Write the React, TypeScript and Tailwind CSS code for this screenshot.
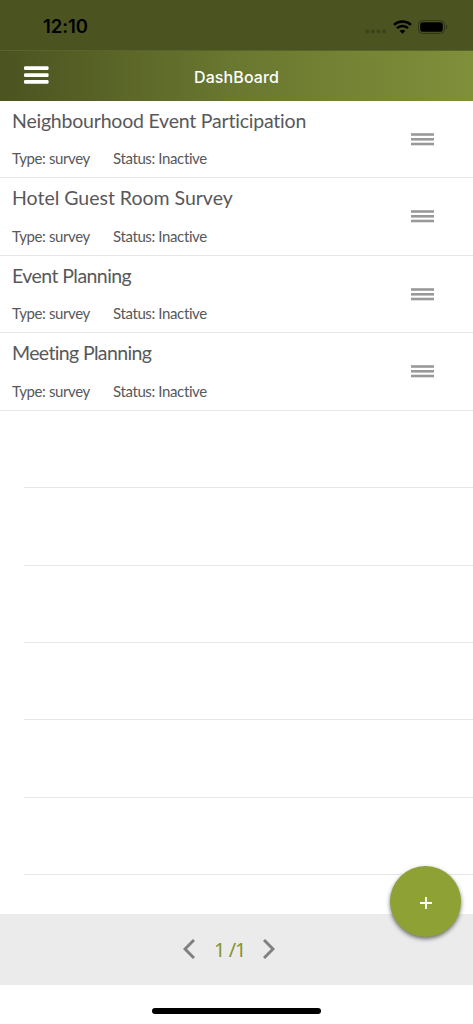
interface Survey {
  title: string
  type: string
  status: string
  tracking: string
}

const surveys: Survey[] = [
  { title: 'Neighbourhood Event Participation', type: 'survey', status: 'Inactive', tracking: 'tracking-[-0.21px]' },
  { title: 'Hotel Guest Room Survey', type: 'survey', status: 'Inactive', tracking: 'tracking-[-0.01px]' },
  { title: 'Event Planning', type: 'survey', status: 'Inactive', tracking: 'tracking-[-0.56px]' },
  { title: 'Meeting Planning', type: 'survey', status: 'Inactive', tracking: 'tracking-[-0.64px]' },
]

const EMPTY_ROWS = 6

function StatusBar() {
  return (
    <div className="flex h-[50px] shrink-0 items-center justify-between bg-[#4b5320] pt-[3px] pr-6 pl-[43px]">
      <span className="font-['Inter',sans-serif] text-[18.5px] font-semibold tracking-[-0.1px] text-black">
        12:10
      </span>
      <div className="flex items-center">
        <svg width="22" height="14" viewBox="0 0 22 14" className="mr-1.5" fill="#3c431b">
          <circle cx="2.2" cy="11.5" r="2" />
          <circle cx="7.8" cy="11.5" r="2" />
          <circle cx="13.4" cy="11.5" r="2" />
          <circle cx="19.1" cy="11.5" r="2" />
        </svg>
        <svg width="19" height="14" viewBox="0 0 19 14" className="mr-1.5" fill="none" stroke="#000">
          <path d="M1 4.9a12.3 12.3 0 0 1 17 0" strokeWidth="2.5" />
          <path d="M4 8.1a8 8 0 0 1 11 0" strokeWidth="2.5" />
          <path d="M6.7 10.9a4.2 4.2 0 0 1 5.6 0L9.5 13.7Z" fill="#000" stroke="none" />
        </svg>
        <svg width="31" height="14" viewBox="0 0 31 14">
          <rect x="0.5" y="0.6" width="26" height="12.8" rx="3.8" fill="none" stroke="#30361a" />
          <rect x="2.2" y="2.3" width="22.6" height="9.4" rx="2.2" fill="#000" />
          <path d="M27.8 4.8c2 .7 2 3.8 0 4.5Z" fill="#30361a" />
        </svg>
      </div>
    </div>
  )
}

function Header() {
  return (
    <header className="grid h-[50.7px] shrink-0 grid-cols-[1fr_auto_1fr] items-center border-t border-[#596426] bg-linear-to-r from-[#4b5320] via-[#6a7830] to-[#7f8f3a] px-6">
      <button type="button" aria-label="Menu" className="pb-px">
        <svg width="25" height="18" viewBox="0 0 25 18" className="-ml-[0.5px]" fill="#fff">
          <rect x="0" y="0.2" width="24.6" height="3.7" rx="1.2" />
          <rect x="0" y="7.2" width="24.6" height="3.7" rx="1.2" />
          <rect x="0" y="14.1" width="24.6" height="3.7" rx="1.2" />
        </svg>
      </button>
      <h1 className="pt-0.5 font-['Inter',sans-serif] text-base font-medium tracking-[0.1px] text-white">
        DashBoard
      </h1>
    </header>
  )
}

function SurveyRow({ survey }: { survey: Survey }) {
  return (
    <li className="flex h-[77.48px] shrink-0 items-center justify-between border-b border-[#e6e6e6] pr-[39px] pl-3 text-[#58585a]">
      <div className="flex h-full flex-col pt-2">
        <h2 className={`text-[19.5px] leading-6 whitespace-nowrap ${survey.tracking}`}>
          {survey.title}
        </h2>
        <div className="mt-[15.5px] flex text-[15px] leading-5 tracking-[-0.38px] whitespace-nowrap">
          <span className="w-[101px]">Type: {survey.type}</span>
          <span>Status: {survey.status}</span>
        </div>
      </div>
      <svg width="23" height="13" viewBox="0 0 23 13" className="mt-px" fill="#999">
        <rect y="0.2" width="23" height="2.6" />
        <rect y="5" width="23" height="2.6" />
        <rect y="9.7" width="23" height="2.6" />
      </svg>
    </li>
  )
}

function Pagination() {
  return (
    <footer className="flex h-[71px] shrink-0 items-center bg-[#ebebeb] pb-px pl-[183px]">
      <svg width="12" height="20" viewBox="0 0 12 20" fill="none" stroke="#808080" strokeWidth="3">
        <path d="M11 1 2 10l9 9" />
      </svg>
      <span className="ml-[19px] w-[30px] pt-0.5 font-['Noto_Sans',sans-serif] text-xl tracking-[-1px] whitespace-nowrap text-[#84942e]">
        1 /1
      </span>
      <svg width="12" height="20" viewBox="0 0 12 20" className="mb-px ml-[19px]" fill="none" stroke="#808080" strokeWidth="3">
        <path d="m1 1 9 9-9 9" />
      </svg>
    </footer>
  )
}

export default function App() {
  return (
    <div className="relative flex h-screen w-full flex-col overflow-hidden bg-white font-['Lato',sans-serif]">
      <StatusBar />
      <Header />

      <ul className="flex min-h-0 flex-1 flex-col overflow-hidden">
        {surveys.map((survey) => (
          <SurveyRow key={survey.title} survey={survey} />
        ))}
        {Array.from({ length: EMPTY_ROWS }, (_, i) => (
          <li key={i} className="ml-6 h-[77.48px] shrink-0 border-b border-[#e6e6e6]" />
        ))}
      </ul>

      <Pagination />

      {/* Home indicator */}
      <div className="flex h-[39px] shrink-0 justify-center pt-[23px]">
        <div className="h-[6px] w-[169px] rounded-full bg-black" />
      </div>

      {/* Add button */}
      <button
        type="button"
        aria-label="Add survey"
        className="absolute right-[12px] bottom-[87px] flex size-[71px] items-center justify-center rounded-full bg-[#8da135] shadow-[0_2px_4px_rgba(0,0,0,0.55)]"
      >
        <svg width="12" height="12" viewBox="0 0 12 12" stroke="#fff" strokeWidth="1.8" className="mt-0.5">
          <path d="M6 0v12M0 6h12" />
        </svg>
      </button>
    </div>
  )
}
